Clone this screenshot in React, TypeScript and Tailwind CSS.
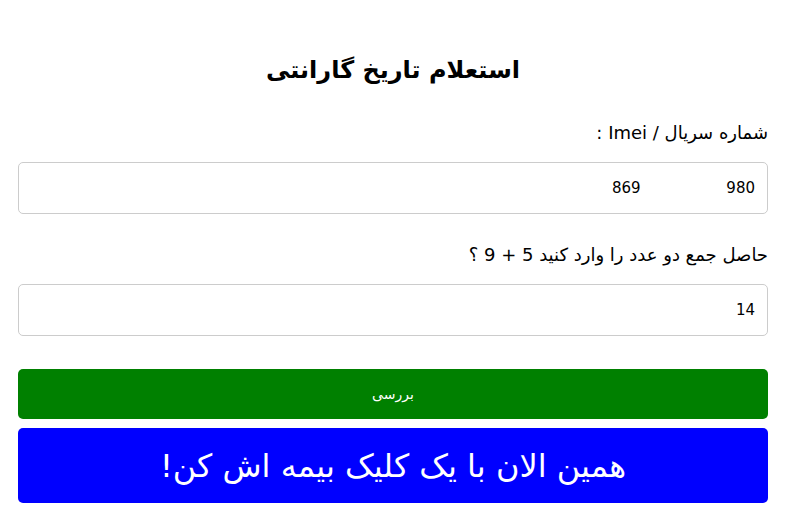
export default function App() {
  return (
    <div
      dir="rtl"
      className="min-h-screen bg-white pl-[18px] pr-[22px] pt-[50px] text-black"
      style={{ fontFamily: "Tahoma, 'DejaVu Sans', 'Noto Sans', sans-serif" }}
    >
      {/* Title */}
      <h1 className="text-center text-[24px] font-bold leading-[40px]">
        استعلام تاریخ گارانتی
      </h1>

      {/* Serial */}
      <label className="mt-[31px] block text-[18px] leading-[24px]">
        شماره سریال / Imei :
      </label>
      <input
        readOnly
        value={"980                  869"}
        className="mt-[17px] block h-[52px] w-full rounded-[5px] border border-[#cccccc] px-[12px] text-[15px] outline-none"
      />

      {/* Captcha */}
      <label className="mt-[29px] block text-[18px] leading-[24px]">
        حاصل جمع دو عدد را وارد کنید 5 + 9 ؟
      </label>
      <input
        readOnly
        value="14"
        className="mt-[17px] block h-[52px] w-full rounded-[5px] border border-[#cccccc] px-[12px] text-[15px] outline-none"
      />

      {/* Actions */}
      <button className="mt-[33px] block h-[50px] w-full rounded-[5px] bg-[#008000] text-[14px] text-white">
        بررسی
      </button>
      <button className="mt-[9px] block h-[75px] w-full rounded-[5px] bg-[#0000ff] text-[32px] text-white">
        همین الان با یک کلیک بیمه اش کن!
      </button>
    </div>
  );
}
